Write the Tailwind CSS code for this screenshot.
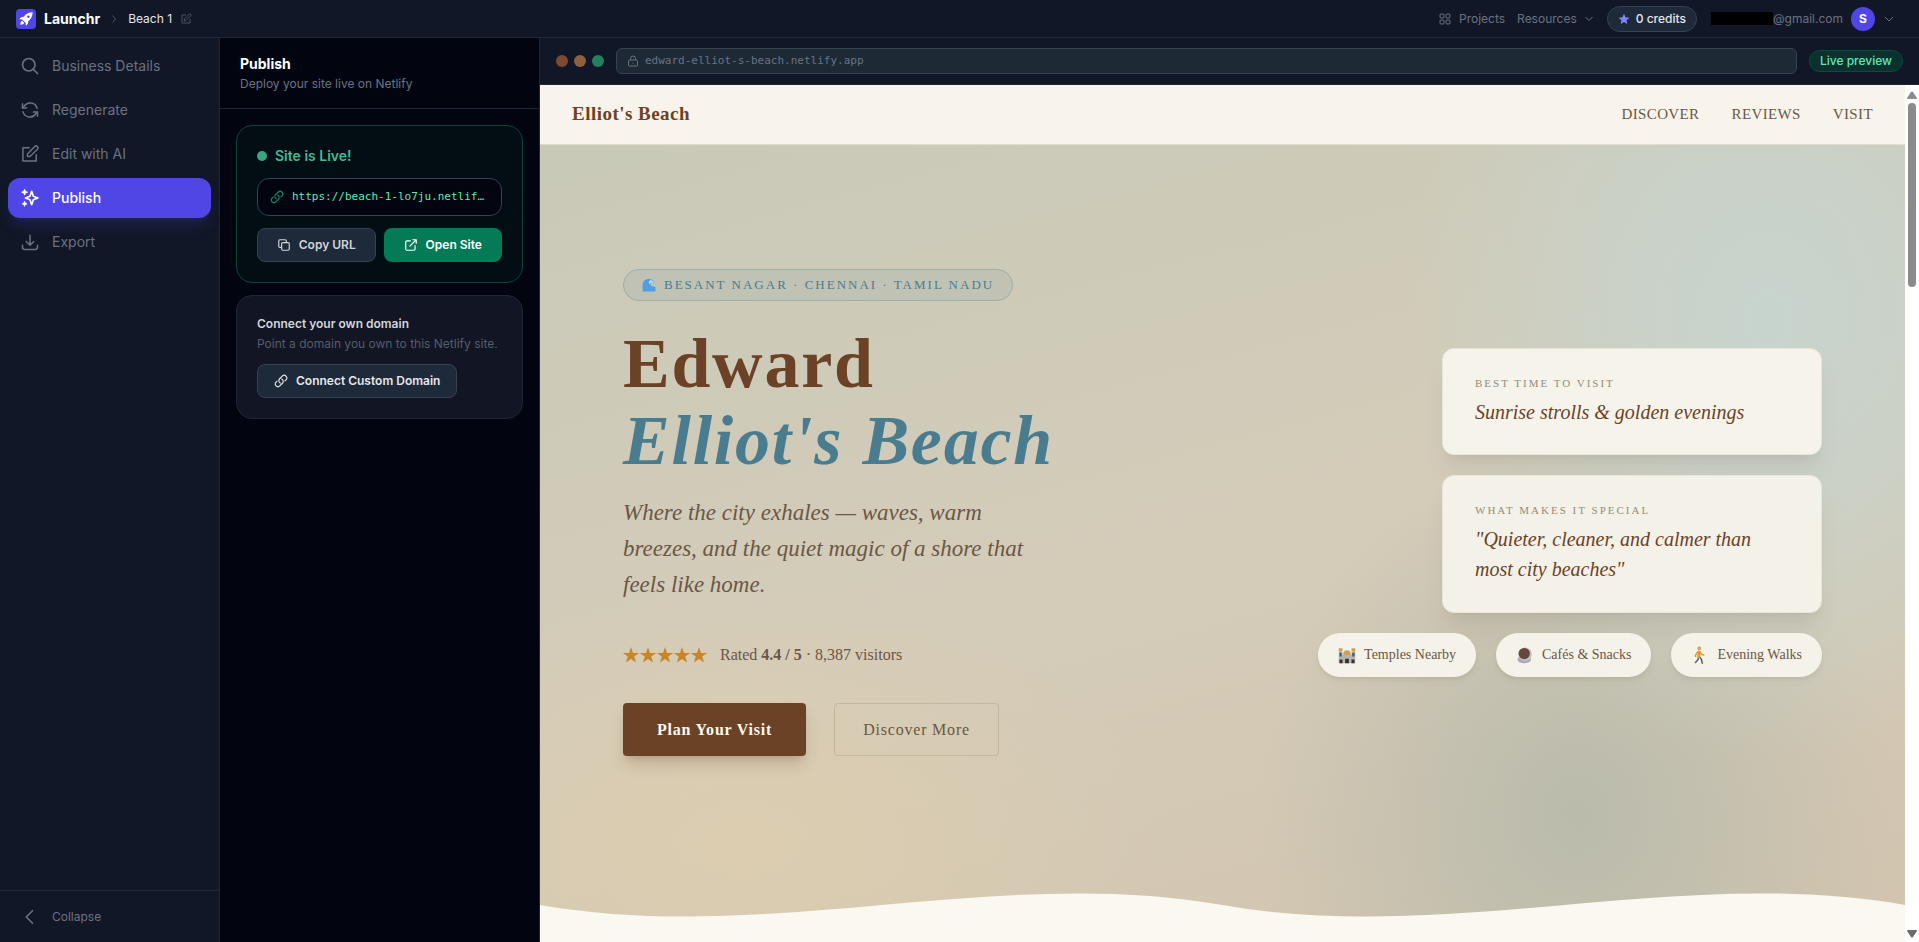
<!DOCTYPE html>
<html lang="en">
<head>
    <meta charset="UTF-8">
    <meta name="viewport" content="width=device-width, initial-scale=1.0">
    <title>Launchr - Beach 1</title>
    <script src="https://cdn.jsdelivr.net/npm/@tailwindcss/browser@4"></script>
</head>
<body class="h-screen flex flex-col overflow-hidden bg-[#020510] font-[Inter,sans-serif] text-gray-500">

    <!-- Top bar -->
    <header class="h-[38px] shrink-0 flex items-center justify-between pl-4 pr-6 bg-[#111726] border-b border-[#1f2736]">
        <div class="flex items-center">
            <a href="#" class="flex items-center gap-2 text-white text-sm font-bold">
                <span class="size-5 rounded bg-[#4f46e5] flex items-center justify-center">
                    <svg class="size-4" viewBox="0 0 24 24" fill="currentColor"><path d="M22 2c-6 .2-10.500 2.600-13.200 6.600-2.700-.2-5 .8-6.800 3.600l4.300.5 5 5 .5 4.300c2.800-1.800 3.800-4.100 3.600-6.800C19.400 12.500 21.800 8 22 2zm-6.500 4.800a1.800 1.800 0 1 1 0 3.600 1.800 1.800 0 0 1 0-3.600z" fill-rule="evenodd"/><path d="M6.300 14.500c-1.900.5-2.800 2.600-2.800 6 3.400 0 5.500-.9 6-2.800z"/></svg>
                </span>
                Launchr
            </a>
            <svg class="size-3 ml-2 text-gray-600" viewBox="0 0 24 24" fill="none" stroke="currentColor" stroke-width="2"><path d="m9 5 6 7-6 7"/></svg>
            <button class="ml-2 flex items-center gap-2 text-xs text-gray-200">
                Beach 1
                <svg class="size-3 text-gray-600" viewBox="0 0 24 24" fill="none" stroke="currentColor" stroke-width="2" stroke-linecap="round" stroke-linejoin="round"><path d="M11 4H4v16h16v-7M18.500 2.500a2.100 2.100 0 0 1 3 3L12 15l-4 1 1-4z"/></svg>
            </button>
        </div>
        <nav class="flex items-center text-xs">
            <a href="#" class="flex items-center gap-2">
                <svg class="size-3" viewBox="0 0 24 24" fill="none" stroke="currentColor" stroke-width="2"><rect x="2" y="2" width="8" height="8" rx="2"/><rect x="14" y="2" width="8" height="8" rx="2"/><rect x="2" y="14" width="8" height="8" rx="2"/><rect x="14" y="14" width="8" height="8" rx="2"/></svg>
                Projects
            </a>
            <button class="ml-3 flex items-center gap-1.5">
                Resources
                <svg class="size-3" viewBox="0 0 24 24" fill="none" stroke="currentColor" stroke-width="2"><path d="m5 8 7 7 7-7"/></svg>
            </button>
            <button class="ml-3 h-[26px] px-2.5 flex items-center gap-1.5 rounded-full border border-gray-700 bg-gray-800 text-gray-200 font-medium">
                <svg class="size-3 text-indigo-400" viewBox="0 0 24 24" fill="currentColor"><path d="m12 1.500 3.100 7 7.600.8-5.700 5.100 1.600 7.500L12 18.100l-6.600 3.800L7 14.400 1.300 9.300l7.600-.8z"/></svg>
                0 credits
            </button>
            <button class="ml-3.5 flex items-center text-gray-500">
                <span class="w-[62px] h-[13px] bg-black"></span>
                @gmail.com
                <span class="ml-2 size-6 rounded-full bg-[#4f46e5] text-white font-bold flex items-center justify-center">S</span>
                <svg class="size-3 ml-2" viewBox="0 0 24 24" fill="none" stroke="currentColor" stroke-width="2"><path d="m4 8 8 8 8-8"/></svg>
            </button>
        </nav>
    </header>

    <div class="flex-1 min-h-0 flex">

        <!-- Sidebar -->
        <aside class="w-[220px] shrink-0 flex flex-col bg-[#111726] border-r border-[#1f2736]">
            <nav class="flex-1 flex flex-col gap-1 p-2 text-sm">
                <a href="#" class="h-10 px-3 flex items-center gap-3 rounded-xl">
                    <svg class="size-5" viewBox="0 0 24 24" fill="none" stroke="currentColor" stroke-width="2" stroke-linecap="round"><circle cx="10.500" cy="10.500" r="7.500"/><path d="m21 21-5.200-5.200"/></svg>
                    Business Details
                </a>
                <a href="#" class="h-10 px-3 flex items-center gap-3 rounded-xl">
                    <svg class="size-5" viewBox="0 0 24 24" fill="none" stroke="currentColor" stroke-width="1.800" stroke-linecap="round" stroke-linejoin="round"><path d="M3 4.500v5h5M21 19.500v-5h-5"/><path d="M20.500 10a8.600 8.600 0 0 0-15.500-2.500L3 9.500M3.500 14A8.600 8.600 0 0 0 19 16.500l2-2"/></svg>
                    Regenerate
                </a>
                <a href="#" class="h-10 px-3 flex items-center gap-3 rounded-xl">
                    <svg class="size-5" viewBox="0 0 24 24" fill="none" stroke="currentColor" stroke-width="1.800" stroke-linecap="round" stroke-linejoin="round"><path d="M11 4.500H3.500v16h16V13"/><path d="M17.600 3.100a2 2 0 0 1 3.300 3.300L12 15H9v-3z"/></svg>
                    Edit with AI
                </a>
                <a href="#" class="h-10 px-3 flex items-center gap-3 rounded-xl bg-[#4f46e5] text-white font-medium shadow-lg shadow-[#4f46e5]/20">
                    <svg class="size-5" viewBox="0 0 24 24" fill="none" stroke="currentColor" stroke-width="2" stroke-linejoin="round"><path d="m14 4 2 6 5.500 2-5.500 2-2 6-2-6-5.500-2 5.500-2z"/><path d="m5.500 1.500 1 2.500L9 5 6.500 6l-1 2.500-1-2.500L2 5l2.500-1zM5.500 16l.9 2.100 2.100.9-2.100.9-.9 2.100-.9-2.100-2.100-.9 2.100-.9z" fill="currentColor" stroke="currentColor" stroke-width="1"/></svg>
                    Publish
                </a>
                <a href="#" class="h-10 px-3 flex items-center gap-3 rounded-xl">
                    <svg class="size-5" viewBox="0 0 24 24" fill="none" stroke="currentColor" stroke-width="1.800" stroke-linecap="round" stroke-linejoin="round"><path d="M3 16v2.500A2.500 2.500 0 0 0 5.500 21h13a2.500 2.500 0 0 0 2.500-2.500V16M7.500 11.500 12 16l4.500-4.500M12 16V4"/></svg>
                    Export
                </a>
            </nav>
            <div class="h-[52px] px-5 flex items-center border-t border-[#1f2736]">
                <button class="flex items-center gap-3 text-xs">
                    <svg class="size-5" viewBox="0 0 24 24" fill="none" stroke="currentColor" stroke-width="2" stroke-linecap="round" stroke-linejoin="round"><path d="M15 4.500 7.500 12l7.500 7.500"/></svg>
                    Collapse
                </button>
            </div>
        </aside>

        <!-- Publish panel -->
        <section class="w-80 shrink-0 border-r border-[#1f2736]">
            <div class="px-5 py-4 border-b border-[#1f2736]">
                <h1 class="text-sm font-bold text-white">Publish</h1>
                <p class="mt-0.5 text-xs">Deploy your site live on Netlify</p>
            </div>
            <div class="p-4 flex flex-col gap-3 text-xs">
                <div class="p-5 rounded-2xl border border-[#114137] bg-[#020d14]">
                    <h2 class="flex items-center gap-2 text-sm font-semibold text-[#41bb92]">
                        <span class="size-2.5 rounded-full bg-[#38a683]"></span>
                        Site is Live!
                    </h2>
                    <div class="mt-3 h-[38px] px-3 flex items-center gap-2 rounded-xl border border-gray-700 bg-[#020510] text-emerald-300">
                        <svg class="size-3.5 shrink-0 text-emerald-600" viewBox="0 0 24 24" fill="none" stroke="currentColor" stroke-width="1.800" stroke-linecap="round" stroke-linejoin="round"><path d="M13.200 8.700a4.500 4.500 0 0 1 1.200 7.200l-4.500 4.500a4.500 4.500 0 0 1-6.400-6.400l1.800-1.700m13.400-.6 1.800-1.700a4.500 4.500 0 0 0-6.400-6.400L9.600 8.100a4.500 4.500 0 0 0 1.200 7.200"/></svg>
                        <a href="#" class="whitespace-nowrap font-['DejaVu_Sans_Mono',monospace] text-[11px]">https://beach-1-lo7ju.netlif…</a>
                    </div>
                    <div class="mt-3 grid grid-cols-2 gap-2 font-semibold">
                        <button class="h-[34px] flex items-center justify-center gap-2 rounded-lg border border-gray-700 bg-gray-800 text-gray-300">
                            <svg class="size-3.5" viewBox="0 0 24 24" fill="none" stroke="currentColor" stroke-width="2" stroke-linejoin="round"><rect x="8" y="8" width="13" height="13" rx="2"/><path d="M16 8V5a2 2 0 0 0-2-2H5a2 2 0 0 0-2 2v9a2 2 0 0 0 2 2h3"/></svg>
                            Copy URL
                        </button>
                        <button class="h-[34px] flex items-center justify-center gap-2 rounded-lg bg-[#047a57] text-white">
                            <svg class="size-3.5" viewBox="0 0 24 24" fill="none" stroke="currentColor" stroke-width="2" stroke-linecap="round" stroke-linejoin="round"><path d="M11 5H5a2 2 0 0 0-2 2v12a2 2 0 0 0 2 2h12a2 2 0 0 0 2-2v-6M15 3h6v6M10 14 21 3"/></svg>
                            Open Site
                        </button>
                    </div>
                </div>

                <div class="p-5 rounded-2xl border border-[#1f2736] bg-[#111524]">
                    <h2 class="font-semibold text-gray-300">Connect your own domain</h2>
                    <p class="mt-1 whitespace-nowrap text-[#565d6b]">Point a domain you own to this Netlify site.</p>
                    <button class="mt-3 h-[34px] px-4 flex items-center gap-2 rounded-lg border border-gray-700 bg-gray-800 font-semibold text-gray-200">
                        <svg class="size-3.5" viewBox="0 0 24 24" fill="none" stroke="currentColor" stroke-width="2" stroke-linecap="round" stroke-linejoin="round"><path d="M13.200 8.700a4.500 4.500 0 0 1 1.200 7.200l-4.500 4.500a4.500 4.500 0 0 1-6.400-6.400l1.800-1.700m13.400-.6 1.800-1.700a4.500 4.500 0 0 0-6.400-6.400L9.600 8.100a4.500 4.500 0 0 0 1.200 7.200"/></svg>
                        Connect Custom Domain
                    </button>
                </div>
            </div>
        </section>

        <!-- Live preview -->
        <main class="flex-1 min-w-0 flex flex-col">
            <div class="h-[47px] shrink-0 px-4 flex items-center gap-3 bg-[#111726] border-b border-[#1f2736]">
                <div class="flex gap-1.5">
                    <span class="size-3 rounded-full bg-[#7f492f]"></span>
                    <span class="size-3 rounded-full bg-[#8d613b]"></span>
                    <span class="size-3 rounded-full bg-[#23805f]"></span>
                </div>
                <div class="flex-1 h-[26px] px-2.5 flex items-center gap-1.5 rounded-md border border-gray-700 bg-[#1e2936] font-['DejaVu_Sans_Mono',monospace] text-[11px]">
                    <svg class="size-3" viewBox="0 0 24 24" fill="none" stroke="currentColor" stroke-width="2" stroke-linejoin="round"><rect x="3" y="10" width="18" height="12" rx="2"/><path d="M7 10V7a5 5 0 0 1 10 0v3M12 15v2"/></svg>
                    edward-elliot-s-beach.netlify.app
                </div>
                <span class="h-[22px] px-2.5 flex items-center rounded-full border border-[#064e3b] bg-[#0a312e] text-xs font-medium text-emerald-300">Live preview</span>
            </div>

            <div class="flex-1 min-h-0 flex">
                <div class="flex-1 min-w-0 flex flex-col font-['Liberation_Serif',serif] text-[#6b5744]">
                    <div class="h-[60px] shrink-0 px-8 flex items-center justify-between bg-[#f8f4ec] border-b border-[#e2dccd]">
                        <a href="#" class="text-[19px] font-bold tracking-wide text-[#6b4226]">Elliot's Beach</a>
                        <nav class="flex gap-8 text-[15px] tracking-wide">
                            <a href="#">DISCOVER</a>
                            <a href="#">REVIEWS</a>
                            <a href="#">VISIT</a>
                        </nav>
                    </div>

                    <div class="relative flex-1 flex items-center justify-between px-[83px] pb-[62px] bg-[radial-gradient(ellipse_360px_440px_at_90%_22%,#c7d4ce_0%,#c7d4ceaa_40%,#c7d4ce00_100%),radial-gradient(ellipse_320px_360px_at_76%_84%,#babbac_0%,#babbacaa_35%,#babbac00_100%),radial-gradient(ellipse_420px_260px_at_15%_88%,#dccdb0_0%,#dccdb000_100%),linear-gradient(165deg,#c9c9b8_0%,#d4ccb9_50%,#d2c4ae_100%)]">
                        <div>
                            <p class="w-fit h-8 px-[18px] flex items-center gap-2 rounded-full border border-[#9fb0a8] bg-[#4a7c8f]/10 text-[13px] tracking-[2px] text-[#4a7c8f]">
                                <svg class="size-3.5" viewBox="0 0 24 24"><path d="M1 23V11C2 4 8 1 14 2c4 0 7 3 7 6-2-2-5-2-6 0-2 3 0 7 8 7v8z" fill="#4f9fe8"/><path d="M14 4c3 0 5 1 6 3-4-1-7 1-7 4-2-2-2-5 1-7z" fill="#bfe0f2"/></svg>
                                BESANT NAGAR · CHENNAI · TAMIL NADU
                            </p>
                            <h2 class="mt-6 text-[70px] leading-[77px] font-bold tracking-wide text-[#6b4226]">Edward<br><em class="text-[#4a7c8f]">Elliot's Beach</em></h2>
                            <p class="mt-4 w-[412px] text-[23px] leading-9 italic">Where the city exhales — waves, warm breezes, and the quiet magic of a shore that feels like home.</p>
                            <div class="mt-10 flex items-center gap-3 text-base">
                                <span class="flex text-[#c8862a]">
                                    <svg class="w-[85px] h-4" viewBox="0 0 85 16" fill="currentColor"><defs><path id="star" d="m8 0 2 5.900h6.200l-5 3.700 1.900 6L8 12l-5.100 3.600 1.900-6-5-3.700H6z"/></defs><use href="#star"/><use href="#star" x="17"/><use href="#star" x="34"/><use href="#star" x="51"/><use href="#star" x="68"/></svg>
                                </span>
                                <p>Rated <strong>4.4 / 5</strong> · 8,387 visitors</p>
                            </div>
                            <div class="mt-9 flex gap-7 text-base tracking-wider">
                                <button class="h-[53px] px-[34px] rounded bg-[#6b4226] font-bold text-[#fdf8ee] shadow-lg shadow-[#6b4226]/25">Plan Your Visit</button>
                                <button class="h-[53px] px-7 rounded border border-[#c3b69c]">Discover More</button>
                            </div>
                        </div>

                        <div class="flex flex-col items-end gap-5">
                            <div class="w-[380px] h-[107px] px-8 pt-6 rounded-xl border border-[#e9e5d8] bg-[#f5f3ea] shadow-xl shadow-[#6b5744]/10">
                                <p class="text-[11px] leading-5 tracking-[2px] text-[#948c7b]">BEST TIME TO VISIT</p>
                                <p class="mt-1 text-xl leading-[30px] italic text-[#6b4226]">Sunrise strolls &amp; golden evenings</p>
                            </div>
                            <div class="w-[380px] h-[138px] px-8 pt-6 rounded-xl border border-[#e9e5d8] bg-[#f4f1e9] shadow-xl shadow-[#6b5744]/10">
                                <p class="text-[11px] leading-5 tracking-[2px] text-[#948c7b]">WHAT MAKES IT SPECIAL</p>
                                <p class="mt-1 text-xl leading-[30px] italic text-[#6b4226]">"Quieter, cleaner, and calmer than most city beaches"</p>
                            </div>
                            <ul class="flex gap-5 text-sm">
                                <li class="h-11 px-5 flex items-center gap-2 rounded-full bg-[#f5f2e9] shadow-md shadow-[#6b5744]/10">
                                    <svg class="size-[18px]" viewBox="0 0 24 24"><path d="M1 7h5v16H1zM18 7h5v16h-5zM6 12h12v11H6z" fill="#b3b5b2"/><path d="M1 3h5v4H1zM18 3h5v4h-5zM7 10c0-6 10-6 10 0v2H7z" fill="#d3a052"/><path d="M2 9h3v5H2zM19 9h3v5h-3z" fill="#3d5f70"/><path d="M2 18h4v5H2zM9.500 17h5v6h-5zM18 18h4v5h-4z" fill="#38302c"/></svg>
                                    Temples Nearby
                                </li>
                                <li class="h-11 px-5 flex items-center gap-2 rounded-full bg-[#f5f2e9] shadow-md shadow-[#6b5744]/10">
                                    <svg class="size-[18px]" viewBox="0 0 24 24"><ellipse cx="11" cy="18" rx="9" ry="5" fill="#aaa9b5"/><circle cx="12" cy="11" r="9" fill="#c4c1c3"/><circle cx="11" cy="10" r="7.500" fill="#654740"/></svg>
                                    Cafés &amp; Snacks
                                </li>
                                <li class="h-11 px-5 flex items-center gap-2 rounded-full bg-[#f5f2e9] shadow-md shadow-[#6b5744]/10">
                                    <svg class="size-[18px]" viewBox="0 0 24 24" fill="none" stroke-width="2" stroke-linecap="round" stroke-linejoin="round"><path d="m10 14-.5 4L6 22M11 14l3 4 1 5" stroke="#5b646b"/><path d="M10.500 8v6" stroke="#e5992b" stroke-width="4"/><path d="m9 8-3 4v2M12 8l2 3 3 1" stroke="#e5992b"/><circle cx="11" cy="3" r="1.500" stroke="#cf9a55"/></svg>
                                    Evening Walks
                                </li>
                            </ul>
                        </div>

                        <svg class="absolute inset-x-0 bottom-0 w-full h-[77px]" viewBox="0 0 1440 77" preserveAspectRatio="none"><path d="M0 40C240 80 480 0 720 40S1200 0 1440 40V77H0z" fill="#fbf8f1"/></svg>
                    </div>
                </div>

                <!-- Scrollbar -->
                <div class="w-3.5 shrink-0 pt-1.5 pb-1 flex flex-col items-center justify-between bg-white">
                    <div class="flex flex-col items-center gap-1">
                        <svg class="w-2.5 h-2" viewBox="0 0 10 8" fill="#8b8b8b"><path d="M4 1q1-1 2 0l4 6q0 1-1 1H1Q0 8 0 7z"/></svg>
                        <span class="w-2 h-[184px] rounded-full bg-[#8b8b8b]"></span>
                    </div>
                    <svg class="w-2.5 h-2" viewBox="0 0 10 8" fill="#6b6b6b"><path d="M4 7q1 1 2 0l4-6q0-1-1-1H1Q0 0 0 1z"/></svg>
                </div>
            </div>
        </main>
    </div>
</body>
</html>
